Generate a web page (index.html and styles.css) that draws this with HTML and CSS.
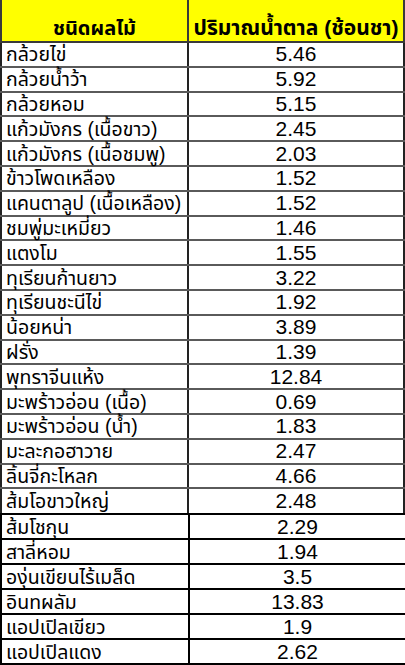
FILE: index.html
```html
<!DOCTYPE html>
<html lang="th">
<head>
<meta charset="utf-8">
<link rel="stylesheet" href="styles.css">
</head>
<body>
<div class="sheet">
<table class="grid top">
  <colgroup><col class="c1"><col class="c2"></colgroup>
  <thead>
    <tr class="head"><th class="h1">ชนิดผลไม้</th><th>ปริมาณน้ำตาล (ช้อนชา)</th></tr>
  </thead>
  <tbody>
    <tr><td>กล้วยไข่</td><td class="num">5.46</td></tr>
    <tr><td>กล้วยน้ำว้า</td><td class="num">5.92</td></tr>
    <tr><td>กล้วยหอม</td><td class="num">5.15</td></tr>
    <tr><td>แก้วมังกร (เนื้อขาว)</td><td class="num">2.45</td></tr>
    <tr><td>แก้วมังกร (เนื้อชมพู)</td><td class="num">2.03</td></tr>
    <tr><td>ข้าวโพดเหลือง</td><td class="num">1.52</td></tr>
    <tr><td>แคนตาลูป (เนื้อเหลือง)</td><td class="num">1.52</td></tr>
    <tr><td>ชมพู่มะเหมี่ยว</td><td class="num">1.46</td></tr>
    <tr><td>แตงโม</td><td class="num">1.55</td></tr>
    <tr><td>ทุเรียนก้านยาว</td><td class="num">3.22</td></tr>
    <tr><td>ทุเรียนชะนีไข่</td><td class="num">1.92</td></tr>
    <tr><td>น้อยหน่า</td><td class="num">3.89</td></tr>
    <tr><td>ฝรั่ง</td><td class="num">1.39</td></tr>
    <tr><td>พุทราจีนแห้ง</td><td class="num">12.84</td></tr>
    <tr><td>มะพร้าวอ่อน (เนื้อ)</td><td class="num">0.69</td></tr>
    <tr><td>มะพร้าวอ่อน (น้ำ)</td><td class="num">1.83</td></tr>
    <tr><td>มะละกอฮาวาย</td><td class="num">2.47</td></tr>
    <tr><td>ลิ้นจี่กะโหลก</td><td class="num">4.66</td></tr>
    <tr><td>ส้มโอขาวใหญ่</td><td class="num">2.48</td></tr>
  </tbody>
</table>
<table class="grid bottom">
  <colgroup><col class="c1b"><col class="c2b"></colgroup>
  <tbody>
    <tr><td>ส้มโชกุน</td><td class="num">2.29</td></tr>
    <tr><td>สาลี่หอม</td><td class="num">1.94</td></tr>
    <tr><td>องุ่นเขียนไร้เมล็ด</td><td class="num">3.5</td></tr>
    <tr><td>อินทผลัม</td><td class="num">13.83</td></tr>
    <tr><td>แอปเปิลเขียว</td><td class="num">1.9</td></tr>
    <tr><td>แอปเปิลแดง</td><td class="num">2.62</td></tr>
  </tbody>
</table>
</div>
</body>
</html>
```
FILE: styles.css
```css
html, body {
  margin: 0;
  padding: 0;
  background: #ffffff;
}
.sheet {
  display: flex;
  flex-direction: column;
  width: 405px;
}
.grid {
  border-collapse: collapse;
  table-layout: fixed;
  font-family: "Liberation Sans", "Noto Sans Thai", "Noto Sans", Tahoma, sans-serif;
  font-size: 19.5px;
  color: #000;
}
.top {
  width: 403px;
}
.c1 { width: 187px; }
.c2 { width: 216px; }
.bottom {
  width: 405px;
}
.c1b { width: 188px; }
.c2b { width: 217px; }

.head th {
  background: #ffff00;
  height: 40px;
  padding: 0 2px 1px;
  vertical-align: bottom;
  font-weight: bold;
  font-size: 21px;
  white-space: nowrap;
  border: 2px solid #3a3a3a;
  border-top: none;
  line-height: 24px;
}
.head .h1 {
  font-size: 20px;
}
.top td {
  height: 24.8px;
  padding: 0 4px;
  border: 2px solid #5a5a5a;
  border-left-color: #222;
  border-right-color: #222;
  white-space: nowrap;
  line-height: 22px;
  box-sizing: border-box;
}
.top tr td + td { border-left-color: #111; }
.bottom td {
  height: 25px;
  padding: 0 4px;
  border: 2px solid #000;
  white-space: nowrap;
  line-height: 22px;
  box-sizing: border-box;
}
.top tbody tr:last-child td { border-bottom: none; }
.num {
  text-align: center;
  font-size: 21px;
}
```
